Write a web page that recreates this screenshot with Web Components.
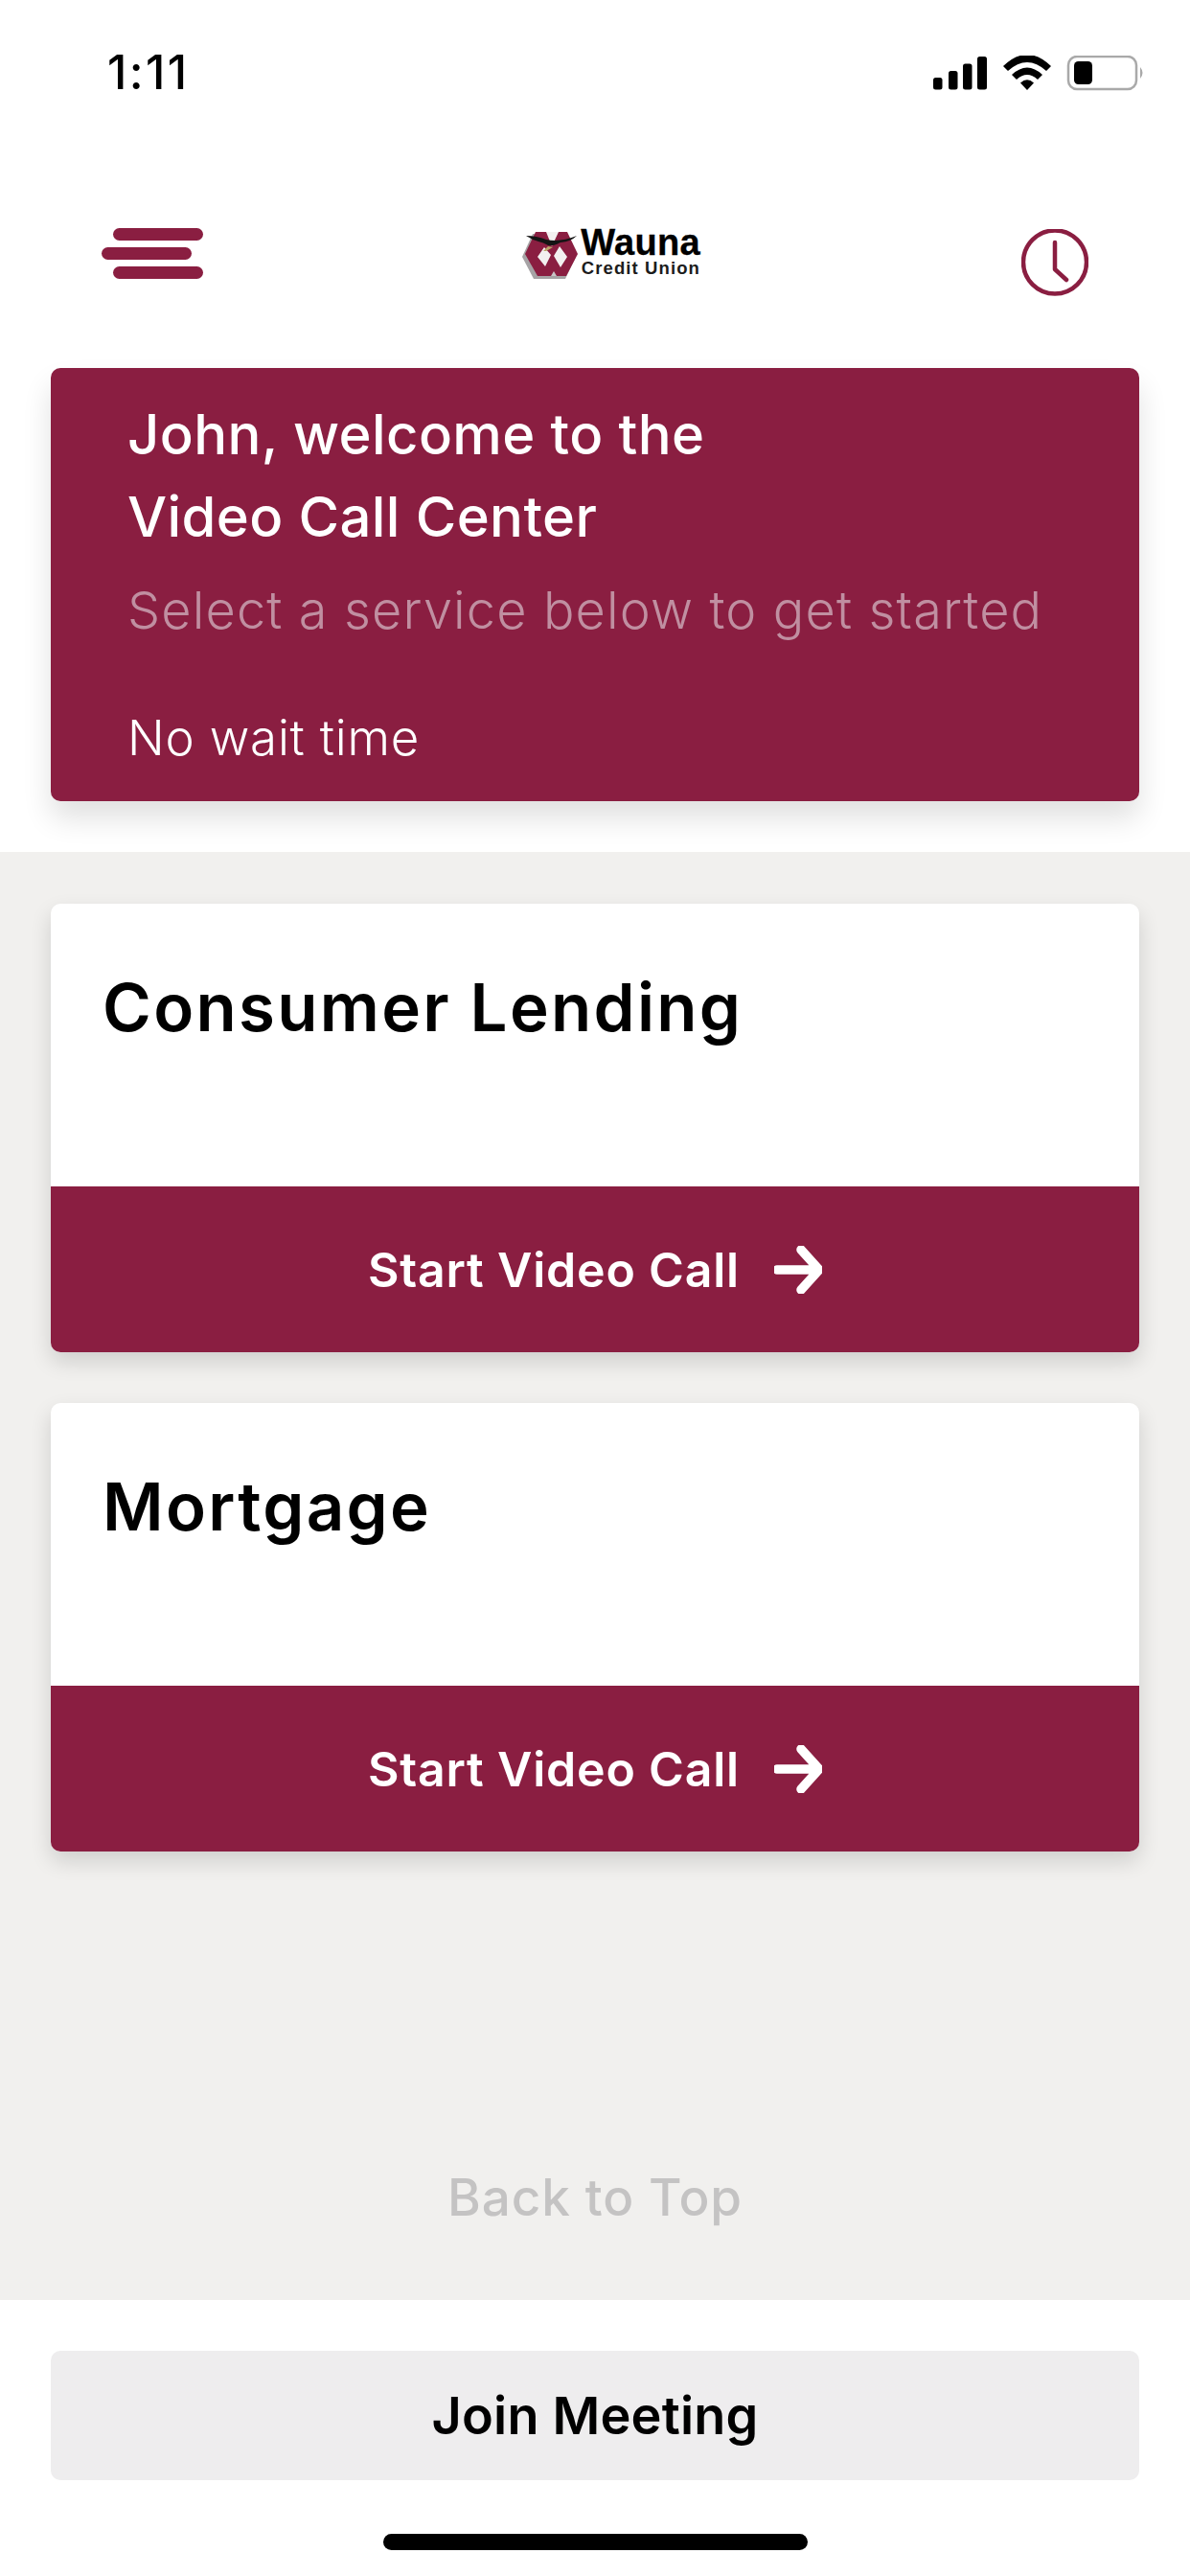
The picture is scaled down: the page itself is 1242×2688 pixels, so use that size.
<!DOCTYPE html>
<html lang="en"><head><meta charset="utf-8"><title>Video Call Center</title>
<style>
html,body{margin:0;padding:0}
body{width:1242px;height:2688px;background:#fff;font-family:Inter,"Liberation Sans",sans-serif;display:flex;flex-direction:column;overflow:hidden}
</style></head><body>
<status-bar></status-bar>
<top-nav></top-nav>
<welcome-card>
  <span slot="l1">John, welcome to the</span>
  <span slot="l2">Video Call Center</span>
  <span slot="sub">Select a service below to get started</span>
  <span slot="wait">No wait time</span>
</welcome-card>
<service-list>
  <service-card name="Consumer Lending"></service-card>
  <service-card name="Mortgage"></service-card>
  <span slot="top">Back to Top</span>
</service-list>
<join-footer></join-footer>
<script>
function def(name,html){customElements.define(name,class extends HTMLElement{
  constructor(){super();const r=this.attachShadow({mode:'open'});r.innerHTML=html;
    const n=this.getAttribute('name');if(n)r.querySelector('.name').textContent=n;}
});}
const C='#8a1e41';
def('status-bar',`<style>
:host{display:flex;justify-content:space-between;align-items:flex-start;height:130px;padding:46px 47px 0 112px;box-sizing:border-box;flex:none}
.t{font:500 49px/60px Inter,sans-serif;color:#000;letter-spacing:2.4px}
svg{display:block;margin-top:12px}
</style><div class="t">1:11</div>
<svg width="221" height="37" viewBox="974 58 221 37">
<rect x="974" y="81" width="9.5" height="12.5" rx="2.5"/><rect x="990" y="74" width="9.5" height="19.5" rx="2.5"/><rect x="1005" y="66.500" width="9.500" height="27" rx="2.500"/><rect x="1020" y="59" width="10" height="34.500" rx="2.500"/>
<path d="M1047 69 Q1072 45 1097 69 L1092 74 Q1072 56 1052 74Z"/><path d="M1056 78 Q1072 63 1088 78 L1083 83 Q1072 73 1061 83Z"/><path d="M1065 86.500 Q1072 80 1079 86.500 L1072 94Z"/>
<rect x="1115" y="59" width="71" height="34" rx="9" fill="none" stroke="#a9a9a9" stroke-width="2.500"/>
<rect x="1121" y="64" width="19" height="24" rx="4.500"/>
<path d="M1190 70 Q1195 76 1190 82Z" fill="#a9a9a9"/>
</svg>`);
def('top-nav',`<style>
:host{display:flex;justify-content:space-between;align-items:flex-start;height:254px;padding:108px 106px 0 106px;box-sizing:border-box;flex:none}
.burger{display:flex;flex-direction:column;gap:7px;width:106px;align-items:flex-end}
.burger i{display:block;width:94px;height:13px;border-radius:7px;background:${C}}
.burger i:nth-child(2){align-self:flex-start}
.logo{display:flex;margin-top:2px;align-items:flex-start;margin-left:-3px}
.words{display:flex;flex-direction:column;color:#000;width:129px;align-items:flex-end}
.w{font:700 38px/27px "Liberation Sans",sans-serif;letter-spacing:.3px;-webkit-text-stroke:.3px #000}
.c{font:700 18.500px/25px "Liberation Sans",sans-serif;letter-spacing:1.1px;color:#1c1c1c}
</style>
<div class="burger"><i></i><i></i><i></i></div>
<div class="logo">
<svg width="58" height="52" viewBox="544 240 58 52" style="display:block;overflow:visible">
<path d="M556 244H590L601 268L590 291H557L545 268Z" fill="#a6a3a5"/>
<path d="M559 242H592L603 265L591 288H561L548 265Z" fill="${C}"/>
<path d="M570 242H583L576 257Z M561 268L568 258L575 266L569 278Z M578 267L584 257L592 268L585 279Z" fill="#f3f0f0"/>
<path d="M575 288L578 283L581 288Z" fill="#c9c5c6"/>
<path d="M549 246Q560 246 570 250Q585 253 602 246Q596 252 585 253Q578 257 572 256Q567 253 562 252Q555 250 549 246Z" fill="#141414"/>
<path d="M567 262L572 257L577 258L570 262Z" fill="#b9a76a"/>
</svg>
<div class="words"><span class="w">Wauna</span><span class="c">Credit Union</span></div>
</div>
<svg width="70" height="70" viewBox="1066 238 70 70" style="display:block;margin-top:1px"><circle cx="1101" cy="272.500" r="33" fill="none" stroke="${C}" stroke-width="4.500"/><path d="M1101 252V280L1113 291" fill="none" stroke="${C}" stroke-width="4.500" stroke-linecap="round" stroke-linejoin="round"/></svg>`);
def('welcome-card',`<style>
:host{display:block;margin:0 53px 53px;height:452px;box-sizing:border-box;padding:0 0 0 80px;background:${C};border-radius:10px;box-shadow:0 18px 30px rgba(0,0,0,.12);color:#fff;flex:none}
div{white-space:nowrap}
.h{font:500 58px/86px Inter,sans-serif;letter-spacing:.4px}
.h1{padding-top:26px}
.s{font:300 54px/86px Inter,sans-serif;letter-spacing:1.15px;color:#c08fa1;margin-top:12px}
.w{font:300 51px/86px Inter,sans-serif;letter-spacing:.8px;margin-top:47px}
</style>
<div class="h h1"><slot name="l1"></slot></div><div class="h"><slot name="l2"></slot></div>
<div class="s"><slot name="sub"></slot></div><div class="w"><slot name="wait"></slot></div>`);
def('service-list',`<style>
:host{display:flex;flex-direction:column;flex:1;min-height:0;background:#f1f0ee;padding:54px 53px 0;gap:53px;box-sizing:border-box}
.t{margin-top:auto;text-align:center;font:500 53px/70px Inter,sans-serif;letter-spacing:.9px;color:#c4c3c3;padding-bottom:72px}
</style><slot></slot><div class="t"><slot name="top"></slot></div>`);
def('service-card',`<style>
:host{display:flex;flex-direction:column;height:468px;border-radius:10px;overflow:hidden;background:#fff;box-shadow:0 10px 22px rgba(0,0,0,.14);flex:none}
.name{height:295px;box-sizing:border-box;padding:66px 54px;font:600 69px/84px Inter,sans-serif;color:#000;letter-spacing:2.3px}
.b{height:173px;background:${C};color:#fff;display:flex;align-items:center;justify-content:center;gap:36px;font:600 50px/60px Inter,sans-serif;letter-spacing:.8px}
svg{display:block}
</style><div class="name"></div><div class="b"><span>Start Video Call</span><svg width="50" height="50" viewBox="0 0 50 50"><path d="M3 25H45M28 4L47 25L28 46" fill="none" stroke="#fff" stroke-width="9.500" stroke-linecap="round" stroke-linejoin="round"/></svg></div>`);
def('join-footer',`<style>
:host{display:block;height:288px;box-sizing:border-box;padding:53px 53px 0;flex:none}
.j{height:135px;border-radius:10px;background:#eeedee;display:flex;align-items:center;justify-content:center;font:600 54px/60px Inter,sans-serif;letter-spacing:.2px;color:#000}
.bar{width:443px;height:17px;border-radius:9px;background:#000;margin:56px auto 0}
</style><div class="j">Join Meeting</div><div class="bar"></div>`);
</script>
</body></html>
